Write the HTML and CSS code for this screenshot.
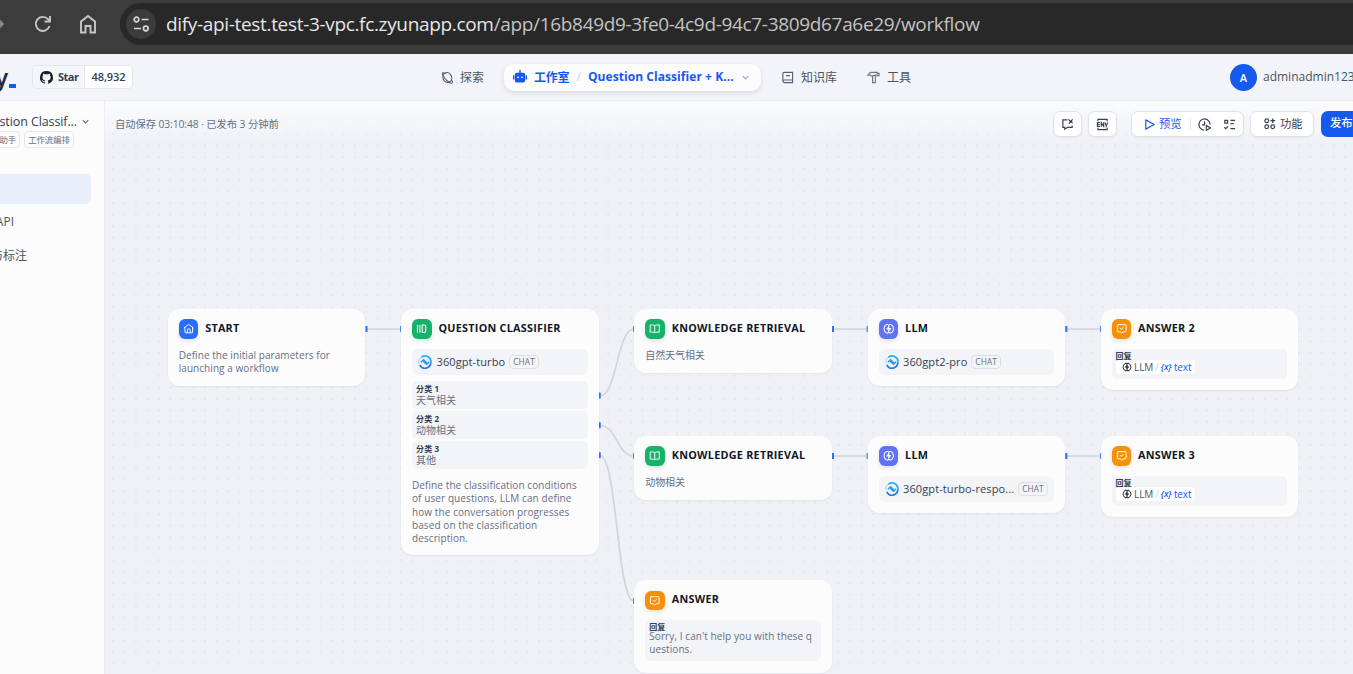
FILE: index.html
```html
<!DOCTYPE html>
<html lang="zh">
<head>
<meta charset="utf-8">
<title>Question Classifier + Knowledge</title>
<link rel="stylesheet" href="styles.css">
</head>
<body>
<svg class="sprite" viewBox="0 0 24 24">
  <symbol id="home" viewBox="0 0 24 24"><path d="M4 9v10a1.500 1.500 0 0 0 1.500 1.500h13A1.500 1.500 0 0 0 20 19V9M2 10.500L12 3l10 7.500M9 20.500V15a3 3 0 0 1 6 0v5.500" fill="none" stroke="currentColor" stroke-width="2" stroke-linejoin="round"/></symbol>
  <symbol id="classify" viewBox="0 0 24 24"><path d="M3 5v14M8 5v14M13 4h3.500a4 4 0 0 1 4 4v8a4 4 0 0 1-4 4H13z" fill="none" stroke="currentColor" stroke-width="2.200" stroke-linecap="round"/></symbol>
  <symbol id="book" viewBox="0 0 24 24"><path d="M12 5.500C10 4 6 4 2.500 4v15C6 19 10 19 12 20.500 14 19 18 19 21.500 19V4C18 4 14 4 12 5.500zv15" fill="none" stroke="currentColor" stroke-width="2" stroke-linejoin="round"/></symbol>
  <symbol id="llm" viewBox="0 0 24 24"><g fill="none" stroke="currentColor" stroke-width="2.100" stroke-linecap="round" stroke-linejoin="round"><path d="M9.500 2.800a9.500 9.500 0 0 0 0 18.400M14.500 2.800a9.500 9.500 0 0 1 0 18.400M9.500 2.800L12 5l2.500-2.200M9.500 21.200L12 19l2.500 2.200M12 5v14M12 8l-4 4.500h4M12 11.500h4L12 16"/></g></symbol>
  <symbol id="answer" viewBox="0 0 24 24"><path d="M4.500 3.500h15a1.500 1.500 0 0 1 1.500 1.500v12a1.500 1.500 0 0 1-1.500 1.500H15l-3 2.500-3-2.500H4.500A1.500 1.500 0 0 1 3 17V5a1.500 1.500 0 0 1 1.500-1.500zM8.500 11l2.500 2.500 4.500-4.500" fill="none" stroke="currentColor" stroke-width="2" stroke-linejoin="round" stroke-linecap="round"/></symbol>
  <symbol id="chev" viewBox="0 0 10 10"><path d="M2 3.500l3 3 3-3" fill="none" stroke="currentColor" stroke-width="1.300"/></symbol>
  <symbol id="brain" viewBox="0 0 24 24">
    <path d="M2 15A10.300 10.300 0 0 1 7 3" fill="none" stroke="#8fcaf8" stroke-width="1.500"/>
    <path d="M6 3.800A10 10 0 0 1 22 13" fill="none" stroke="#20b5f5" stroke-width="3"/>
    <path d="M22 13A10 10 0 0 1 3 17" fill="none" stroke="#2878ed" stroke-width="3"/>
    <path d="M5 12.500l4.500-4.500 5 5-2.500 2.500M19 11.500L14.500 16l-5-5L12 8.500" fill="none" stroke="#2499ef" stroke-width="2.200"/>
  </symbol>
</svg>

<div class="browser">
  <svg class="b-fwd" viewBox="0 0 16 16"><path d="M0 8h13M7.500 2.500L13 8l-5.500 5.500" fill="none" stroke="#8b8b8b" stroke-width="1.800"/></svg>
  <svg class="b-reload" viewBox="0 0 18 18"><path d="M15.500 11A7 7 0 1 1 14 4.200L16 6M16 1v5.500h-5.500" fill="none" stroke="#c7c7c7" stroke-width="1.900"/></svg>
  <svg class="b-home" viewBox="0 0 18 20"><path d="M2 18.500V7.500L9 2l7 5.500v11h-4.500V12h-5v6.500z" fill="none" stroke="#c7c7c7" stroke-width="1.900"/></svg>
  <div class="url">
    <span class="site"><svg viewBox="0 0 18 18"><g fill="none" stroke="#d5d5d5" stroke-width="1.700"><circle cx="4.500" cy="4.500" r="2.300"/><path d="M9.500 4.500h7M2 13.500h7"/><circle cx="13.800" cy="13.500" r="2.300"/></g></svg></span>
    <span class="address"><b>dify-api-test.test-3-vpc.fc.zyunapp.com</b>/app/16b849d9-3fe0-4c9d-94c7-3809d67a6e29/workflow</span>
  </div>
</div>

<header class="top">
  <div class="brand"><span class="logo">y</span><i></i></div>
  <div class="gh">
    <span class="gh-star"><svg viewBox="0 0 16 16"><path fill="#1b2027" d="M8 0a8 8 0 0 0-2.530 15.590c.4.070.55-.17.55-.38v-1.490c-2.010.37-2.530-.49-2.690-.94-.09-.23-.48-.94-.82-1.130-.28-.15-.68-.52-.01-.53.63-.01 1.080.58 1.230.82.72 1.210 1.870.87 2.330.66.07-.52.28-.87.51-1.070-1.780-.2-3.640-.89-3.640-3.950 0-.87.310-1.590.82-2.150-.08-.2-.36-1.020.08-2.120 0 0 .67-.21 2.200.82a7.600 7.600 0 0 1 4 0c1.530-1.040 2.200-.82 2.200-.82.44 1.100.16 1.920.08 2.120.51.56.82 1.270.82 2.150 0 3.070-1.870 3.750-3.650 3.950.29.25.54.73.54 1.480v2.200c0 .21.150.46.550.38A8 8 0 0 0 8 0z"/></svg>Star</span>
    <span class="gh-num">48,932</span>
  </div>
  <nav class="nav">
    <a class="explore"><svg viewBox="0 0 14 14"><g fill="none" stroke="#566074" stroke-width="1.200"><ellipse cx="6.800" cy="7" rx="4.700" ry="5.300" transform="rotate(-20 6.800 7)"/><path d="M4 2.300C1.500 1.300.9 2 1.800 4.200c1 2.300 3 4.800 5 6.600 2.300 2 4.500 2.700 5.200 1.900.6-.7.100-2-.8-3.700"/></g></svg>探索</a>
    <div class="studio">
      <svg class="robot" viewBox="0 0 14 14"><path fill="#155aef" d="M6.300 0h1.400v2.700h2.600c1.100 0 1.900.8 1.900 1.900v6c0 1.100-.8 1.900-1.900 1.900H3.700a1.900 1.900 0 0 1-1.900-1.900v-6c0-1.100.8-1.900 1.900-1.900h2.600zM0 5.500h1.300v4H0zM12.700 5.500H14v4h-1.300z"/><path fill="#fff" d="M4.300 6.500h1.400v1.400H4.300zM8.300 6.500h1.400v1.400H8.300z"/></svg>
      <b class="cjk">工作室</b><em>/</em><b class="appname">Question Classifier + K...</b><svg class="chev"><use href="#chev"/></svg>
    </div>
    <a class="know"><svg viewBox="0 0 14 14"><path d="M3.500 1.500h9v11h-9a2 2 0 0 1-1.500-2V3a1.500 1.500 0 0 1 1.500-1.500zM2 10.500q.5-.8 1.500-.8h9M5.500 5h4" fill="none" stroke="#566074" stroke-width="1.200"/></svg>知识库</a>
    <a class="tools"><svg viewBox="0 0 14 14"><path d="M1 4.500C2 2.500 3 1.500 5 1.500h6v1h2v2.500h-2v-.700H9v8.200H6V5.200H4.500C3.500 4 2 4 1 4.500zM6 5h3" fill="none" stroke="#6c7487" stroke-width="1.200"/></svg>工具</a>
  </nav>
  <div class="user"><span class="avatar">A</span><span class="uname">adminadmin123</span></div>
</header>

<div class="main">
  <aside class="side">
    <div class="app"><span>Question Classif...</span><svg class="chev"><use href="#chev"/></svg></div>
    <div class="tags"><span>助手</span><span>工作流编排</span></div>
    <div class="item active"></div>
    <div class="item api">API</div>
    <div class="item log">与标注</div>
  </aside>

  <section class="canvas">
    <div class="toolbar">
      <div class="saved">自动保存 03:10:48 · 已发布 3 分钟前</div>
      <div class="actions">
        <span class="btn sq"><svg viewBox="0 0 14 14"><path d="M7 2H2v8h2v2l3-2h5V8M8 1.500l4.500 4M12.500 1.500l-4 4.500M9 4h3" fill="none" stroke="#354052" stroke-width="1.300"/></svg></span>
        <span class="btn sq env"><svg viewBox="0 0 14 14"><path d="M2 3.500V1.500h10v2M2 10.500v2h10v-2M4.300 5H1.500v4h2.800M1.500 7h2.500M5.700 9.500V5l2.600 4V4.500M9.700 4.700l1.400 4.300 1.500-4.300" fill="none" stroke="#354052" stroke-width="1.200"/></svg></span>
        <i class="div"></i>
        <span class="btn run">
          <svg viewBox="0 0 14 14"><path d="M3 2l9 5-9 5z" fill="none" stroke="#155aef" stroke-width="1.300" stroke-linejoin="round"/></svg><span class="blue">预览</span><i class="div"></i>
          <svg class="clock" viewBox="0 0 14 14"><path d="M6.500 13A6 6 0 1 1 13 7M7 3.500V7.500H4.500" fill="none" stroke="#354052" stroke-width="1.300"/><path d="M9 8l4.500 2.700L9 13.300z" fill="none" stroke="#354052" stroke-width="1.200"/></svg>
          <svg class="list" viewBox="0 0 14 14"><path d="M2 2.500h3v3H2zM1.500 10l1.500 1.500L5.500 9M8 2.500h5M8 6h3.500M8 11.500h5" fill="none" stroke="#354052" stroke-width="1.300"/></svg>
        </span>
        <span class="btn feat"><svg viewBox="0 0 14 14"><g fill="none" stroke="#354052" stroke-width="1.300"><circle cx="4" cy="4" r="2"/><circle cx="4" cy="10.500" r="2"/><circle cx="10.500" cy="10.500" r="2"/><path d="M10.500 1.500v5M8 4h5"/></g></svg>功能</span>
        <span class="publish">发布</span>
      </div>
    </div>
  </section>
</div>

<div class="flow">
  <svg class="edges" viewBox="0 0 1353 674">
    <g fill="none" stroke="#d0d5dc" stroke-width="1.700">
      <path d="M367 329H400M833 329H867M1067 329H1100M833 456H867M1067 456H1100"/>
      <path d="M600 396C617 396 617 329 634 329M600 425.500C617 425.500 617 456 634 456M600 455.500C617 455.500 617 601 634 601"/>
    </g>
    <g fill="#2970ff">
      <path d="M365.500 326h2v6h-2zM832 326h2v6h-2zM1065.300 326h2v6h-2zM832 453h2v6h-2zM1065.300 453h2v6h-2zM598.700 392.500h2v6h-2zM598.700 422.300h2v6h-2zM598.700 452.300h2v6h-2z"/>
      <path opacity=".8" d="M400 326h1.300v6H400zM633 326h1.300v6h-1.300zM866.500 326h1.300v6h-1.300zM1100 326h1.300v6H1100zM633 453h1.300v6h-1.300zM866.500 453h1.300v6h-1.300zM1100 453h1.300v6H1100zM633 598h1.300v6h-1.300z"/>
    </g>
  </svg>

  <article class="node n-start">
    <h3><span class="ic blue-bg"><svg><use href="#home"/></svg></span><span class="t-start">START</span></h3>
    <p>Define the initial parameters for<br>launching a workflow</p>
  </article>

  <article class="node n-class">
    <h3><span class="ic green"><svg><use href="#classify"/></svg></span><span>QUESTION CLASSIFIER</span></h3>
    <div class="model"><svg><use href="#brain"/></svg><span>360gpt-turbo</span><small>CHAT</small></div>
    <div class="cls"><b>分类 1</b><span>天气相关</span></div>
    <div class="cls"><b>分类 2</b><span>动物相关</span></div>
    <div class="cls"><b>分类 3</b><span>其他</span></div>
    <p>Define the classification conditions<br>of user questions, LLM can define<br>how the conversation progresses<br>based on the classification<br>description.</p>
  </article>

  <article class="node n-kr1">
    <h3><span class="ic green"><svg><use href="#book"/></svg></span><span>KNOWLEDGE RETRIEVAL</span></h3>
    <p>自然天气相关</p>
  </article>
  <article class="node n-kr2">
    <h3><span class="ic green"><svg><use href="#book"/></svg></span><span>KNOWLEDGE RETRIEVAL</span></h3>
    <p>动物相关</p>
  </article>

  <article class="node n-llm1">
    <h3><span class="ic indigo"><svg><use href="#llm"/></svg></span><span>LLM</span></h3>
    <div class="model"><svg><use href="#brain"/></svg><span>360gpt2-pro</span><small>CHAT</small></div>
  </article>
  <article class="node n-llm2">
    <h3><span class="ic indigo"><svg><use href="#llm"/></svg></span><span>LLM</span></h3>
    <div class="model"><svg><use href="#brain"/></svg><span>360gpt-turbo-respo...</span><small>CHAT</small></div>
  </article>

  <article class="node n-ans2">
    <h3><span class="ic orange"><svg><use href="#answer"/></svg></span><span>ANSWER 2</span></h3>
    <div class="reply"><b>回复</b><span class="var"><svg><use href="#llm"/></svg>LLM<em>/</em><i>{x}</i><u>text</u></span></div>
  </article>
  <article class="node n-ans3">
    <h3><span class="ic orange"><svg><use href="#answer"/></svg></span><span>ANSWER 3</span></h3>
    <div class="reply"><b>回复</b><span class="var"><svg><use href="#llm"/></svg>LLM<em>/</em><i>{x}</i><u>text</u></span></div>
  </article>

  <article class="node n-ans1">
    <h3><span class="ic orange"><svg><use href="#answer"/></svg></span><span>ANSWER</span></h3>
    <div class="reply"><b>回复</b><span class="msg">Sorry, I can't help you with these q<br>uestions.</span></div>
  </article>
</div>
</body>
</html>
```
FILE: styles.css
```css
* { box-sizing: border-box; }
body {
  margin: 0; width: 1353px; height: 674px; overflow: hidden; position: relative;
  display: flex; flex-direction: column;
  font-family: "Open Sans", "Noto Sans CJK SC", sans-serif; background: #f0f1f7;
  white-space: nowrap;
}
svg { flex: none; display: block; }
i, em { font-style: normal; }
.sprite { position: absolute; width: 0; height: 0; }

/* browser chrome */
.browser { height: 54px; background: #3c3c3c; display: flex; align-items: flex-start; flex: none; overflow: hidden; }
.b-fwd { width: 16px; height: 16px; margin: 16px 0 0 -10px; }
.b-reload { width: 18px; height: 18px; margin: 15px 0 0 28px; }
.b-home { width: 18px; height: 20px; margin: 14px 0 0 27px; }
.url { margin: 3px 0 0 23px; width: 1300px; flex: none; height: 42px; border-radius: 21px; background: #282828; display: flex; align-items: center; padding-left: 6px; }
.site { width: 30px; height: 30px; border-radius: 50%; background: #3c3c3c; display: grid; place-items: center; }
.site svg { width: 18px; height: 18px; }
.address { margin-left: 10px; font-size: 19px; color: #c3c3c3; letter-spacing: -.33px; line-height: 42px; }
.address b { font-weight: 400; color: #e6e6e6; }

/* app header */
.top { height: 47px; flex: none; background: #f3f4f9; border-bottom: 1px solid #e9ebf0; display: flex; align-items: center; }
.brand { width: 16px; margin-right: 16px; display: flex; align-items: flex-end; height: 33px; flex: none; }
.logo { width: 8px; font: 600 24px/35px "Open Sans"; color: #1d2939; display: flex; justify-content: flex-end; }
.brand i { width: 7px; height: 4px; background: #155aef; margin: 0 0 6px 1px; }
.gh { height: 24px; width: 101px; display: flex; border: 1px solid #e4e7ec; border-radius: 5px; overflow: hidden; font-size: 11px; font-weight: 600; color: #344054; line-height: 22px; flex: none; }
.gh-star { width: 52px; display: flex; align-items: center; gap: 5px; padding-left: 7px; border-right: 1px solid #e4e7ec; background: #f5f6fa; font-weight: 700; letter-spacing: -.5px; }
.gh-star svg { width: 13px; height: 13px; }
.gh-num { flex: 1; background: #fff; text-align: center; letter-spacing: -.1px; }
.nav { display: flex; align-items: center; font-size: 12px; color: #495464; margin-left: 308px; height: 100%; width: 620px; flex: none; }
.nav a { display: flex; align-items: center; padding-bottom: 1px; }
.nav a svg { width: 13px; height: 13px; margin: 1px 6px 0 0; }
.explore { width: 63px; }
.studio { width: 257px; height: 27px; border-radius: 10px; background: #fcfcfd; box-shadow: 0 2px 5px #1018281c; display: flex; align-items: center; color: #155aef; padding: 0 0 1px 9px; }
.robot { width: 14px; height: 14px; margin-right: 7px; }
.cjk { font-size: 12px; font-weight: 600; letter-spacing: -.3px; width: 36px; }
.studio em { color: #d0d5dd; width: 18px; text-align: center; font-size: 12px; }
.appname { font-size: 12px; font-weight: 700; letter-spacing: .06px; width: 146px; }
.chev { width: 9px; height: 9px; }
.studio .chev { margin: 1px 0 0 7px; color: #85a9f7; }
.know { margin-left: 20px; width: 86px; }
.nav .know svg, .nav .tools svg { margin-right: 7px; }
.user { margin-left: 169px; display: flex; align-items: center; font-size: 12px; color: #495464; gap: 7px; }
.uname { margin: -1px 0 0 -1px; }
.avatar { width: 27px; height: 27px; border-radius: 50%; background: #155aef; color: #fff; display: grid; place-items: center; font-size: 11px; font-weight: 600; }

/* sidebar */
.main { flex: 1; display: flex; min-height: 0; }
.side { width: 105px; flex: none; background: #fcfcfd; border-right: 1px solid #ebedf1; overflow: hidden; display: flex; flex-direction: column; }
.app { height: 17px; margin-top: 12px; display: flex; align-items: center; justify-content: flex-end; padding-right: 14px; font-size: 12.500px; color: #354052; letter-spacing: -.1px; flex: none; }
.app .chev { margin-left: 4px; color: #676f83; }
.tags { display: flex; justify-content: flex-end; padding-right: 30px; gap: 4px; margin-top: 1px; flex: none; }
.tags span { height: 17px; padding: 0 3px; border: 1px solid #e4e6eb; border-radius: 4px; font-size: 8.400px; line-height: 15px; color: #676f83; }
.item { color: #495464; font-size: 12px; line-height: 30px; height: 30px; flex: none; display: flex; justify-content: flex-end; margin-top: 4px; }
.item.active { background: #e8eefb; border-radius: 0 5px 5px 0; width: 91px; margin-top: 26px; }
.api { width: 14px; margin-top: 3px; }
.log { width: 27px; }

/* canvas */
.canvas {
  flex: 1; min-width: 0; overflow: hidden;
  background: linear-gradient(#fafbfc 0, #f5f6f900 44px), radial-gradient(circle at 50% 50%, #e6e7ec 0, #e6e7ec .7px, #e6e7ec00 1.200px) 2.200px 4.300px / 11.530px 11.530px, #f0f1f7;
}
.toolbar { display: flex; justify-content: space-between; height: 46px; padding-left: 10px; width: 1270px; align-items: center; }
.saved { font-size: 10.300px; color: #676f83; letter-spacing: -.08px; padding-bottom: 2px; }
.actions { display: flex; align-items: center; width: 322px; flex: none; }
.btn { height: 26px; flex: none; border: 1px solid #dfe2e8; border-radius: 7px; background: #fff; display: flex; align-items: center; box-shadow: 0 1px 2px #1018280d; font-size: 11.300px; line-height: 22px; color: #354052; }
.btn svg { width: 13px; height: 13px; }
.sq { width: 29px; justify-content: center; }
.env { margin-left: 6px; }
.div { width: 1px; height: 12px; background: #dfe1e7; margin: 0 6px 0 8px; }
.run { width: 113px; padding-left: 11px; }
.run .blue { color: #155aef; margin-left: 3px; width: 24px; }
.run .div { margin: 0 7px 0 7px; }
.clock { margin-right: 12px; }
.feat { width: 64px; margin-left: 6px; padding-left: 12px; gap: 4px; padding-bottom: 1px; }
.publish { height: 26px; background: #155aef; color: #fff; border-radius: 7px; margin-left: 7px; width: 70px; flex: none; font-size: 11.300px; font-weight: 500; line-height: 24px; padding-left: 9px; }

/* workflow */
.flow { position: absolute; inset: 0; overflow: hidden; }
.edges { position: absolute; left: 0; top: 0; width: 1353px; height: 674px; }
.node { position: absolute; width: 197.500px; background: #fcfcfd; border-radius: 12px; box-shadow: 0 1px 2px #10182810; padding: 10.500px 11px 0; }
.n-start { left: 167.700px; top: 308.600px; height: 77.500px; }
.n-class { left: 401px; top: 308.600px; height: 246.500px; }
.n-kr1, .n-kr2 { left: 634.300px; height: 64px; }
.n-llm1, .n-llm2 { left: 867.600px; height: 77.500px; }
.n-ans2, .n-ans3 { left: 1100.600px; height: 81px; }
.n-kr1, .n-llm1, .n-ans2 { top: 308.600px; }
.n-kr2, .n-llm2, .n-ans3 { top: 435.600px; }
.n-ans1 { left: 634.300px; top: 580px; height: 93px; }
.node h3 { margin: 0; height: 20px; display: flex; align-items: center; gap: 7px; font-size: 10.800px; letter-spacing: .26px; font-weight: 700; color: #101828; line-height: 18px; padding-bottom: 1px; }
.node h3 > span:last-child { margin-top: -1.500px; }
.ic { width: 19.500px; height: 19.500px; flex: none; border-radius: 6px; color: #fff; display: grid; place-items: center; box-shadow: 0 2px 4px #1018281c; margin-top: 1px; }
.ic svg { width: 11.500px; height: 11.500px; }
.blue-bg { background: #296dff; }
.green { background: #17b26a; }
.indigo { background: #6172f3; }
.orange { background: #f79009; }
.node p { margin: 10px 0 0; font-size: 10px; letter-spacing: .06px; line-height: 13.200px; color: #676f83; }
.n-kr1 p, .n-kr2 p { letter-spacing: -.1px; }
.n-class p { letter-spacing: .09px; }
.model { margin-top: 9.500px; height: 26px; border-radius: 6px; background: #f2f4f7; display: flex; align-items: center; padding-left: 6px; font-size: 11px; letter-spacing: .1px; color: #354052; }
.model svg { width: 14px; height: 14px; margin-right: 4.500px; }
.model small { margin-left: 4px; height: 14px; border: 1px solid #dddfe5; border-radius: 4px; padding: 0 3px; font-size: 8.300px; line-height: 12px; color: #676f83; }
.cls { height: 28.500px; margin-top: 1.500px; background: #f2f4f7; border-radius: 5px; padding: 2.500px 4px; display: flex; flex-direction: column; font-size: 10px; line-height: 12px; color: #676f83; }
.model + .cls { margin-top: 6px; }
.cls b, .reply b { font-size: 8px; line-height: 11px; color: #354052; font-weight: 700; }
.cls b { letter-spacing: .15px; }
.reply { margin-top: 9.500px; height: 30.500px; background: #f2f4f7; border-radius: 5px; padding: 2px 4px; display: flex; flex-direction: column; align-items: flex-start; color: #676f83; font-size: 10px; }
.reply b { line-height: 9.500px; }
.var { height: 14px; background: #fff; border-radius: 4px; display: flex; align-items: center; padding: 0 4px 0 6px; color: #495464; letter-spacing: -.1px; line-height: 14px; }
.var svg { width: 10px; height: 10px; margin-right: 2.500px; color: #101828; }
.var em { color: #d0d5dd; margin: 0 2px; }
.var i, .var u { color: #155aef; text-decoration: none; }
.var i { font-style: italic; margin-right: 2.500px; font-weight: 600; font-size: 9px; }
.n-ans1 .reply { height: 41px; }
.msg { line-height: 13px; letter-spacing: .08px; margin-top: -1.500px; }
```
